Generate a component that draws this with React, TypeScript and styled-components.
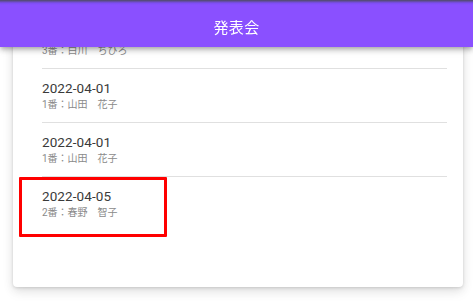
import React from "react";
import styled, { createGlobalStyle } from "styled-components";

const Global = createGlobalStyle`
  html, body { margin: 0; padding: 0; background: #ffffff; }
  body {
    font-family: Roboto, "Noto Sans CJK JP", "Noto Sans", sans-serif;
    overflow: hidden;
  }
`;

const Page = styled.div`
  position: relative;
  width: 473px;
  height: 301px;
  overflow: hidden;
  background: #ffffff;
`;

const AppBar = styled.header`
  position: fixed;
  top: 0;
  left: 0;
  right: 0;
  height: 47px;
  box-sizing: border-box;
  padding-top: 5px;
  display: flex;
  align-items: center;
  justify-content: center;
  background: linear-gradient(to bottom, #4f4b63 0px, #7d4ef0 3px, #8a50ff 5px, #8a50ff 100%);
  box-shadow: 0 2px 4px -1px rgba(0, 0, 0, 0.2), 0 4px 5px 0 rgba(0, 0, 0, 0.14),
    0 1px 10px 0 rgba(0, 0, 0, 0.12);
  z-index: 10;
`;

const Title = styled.h1`
  margin: 0;
  font-size: 15px;
  font-weight: 400;
  color: #ffffff;
  letter-spacing: 0.3px;
`;

const Card = styled.section`
  margin: 7px 0 0 13px;
  width: 450px;
  height: 280px;
  box-sizing: border-box;
  padding: 8px 16px 0 29px;
  background: #ffffff;
  border-radius: 4px;
  box-shadow: 0 1px 3px rgba(0, 0, 0, 0.12), 0 3px 10px rgba(0, 0, 0, 0.1),
    0 6px 14px rgba(0, 0, 0, 0.05);
`;

const List = styled.ul`
  list-style: none;
  margin: 0;
  padding: 0;
`;

const Item = styled.li<{ $last?: boolean }>`
  padding: 9px 0 10px;
  border-bottom: ${(p) => (p.$last ? "none" : "1px solid #e0e0e0")};
  display: flex;
  flex-direction: column;
`;

const DateText = styled.span`
  font-size: 13.5px;
  line-height: 20px;
  font-weight: 400;
  color: #3a3a3a;
  letter-spacing: 0.1px;
`;

const Sub = styled.span`
  font-size: 10px;
  line-height: 14px;
  color: #8a8a8a;
`;

const Highlight = styled.div`
  position: absolute;
  left: 19px;
  top: 177px;
  width: 148px;
  height: 60px;
  box-sizing: border-box;
  border: 3px solid #ff0000;
  border-radius: 1px;
  pointer-events: none;
  z-index: 5;
`;

const items = [
  { date: "2022-03-25", sub: "3番：白川　ちひろ" },
  { date: "2022-04-01", sub: "1番：山田　花子" },
  { date: "2022-04-01", sub: "1番：山田　花子" },
  { date: "2022-04-05", sub: "2番：春野　智子" },
];

export default function App() {
  return (
    <Page>
      <Global />
      <AppBar>
        <Title>発表会</Title>
      </AppBar>
      <Card>
        <List>
          {items.map((it, i) => (
            <Item key={i} $last={i === items.length - 1}>
              <DateText>{it.date}</DateText>
              <Sub>{it.sub}</Sub>
            </Item>
          ))}
        </List>
      </Card>
      <Highlight />
    </Page>
  );
}
